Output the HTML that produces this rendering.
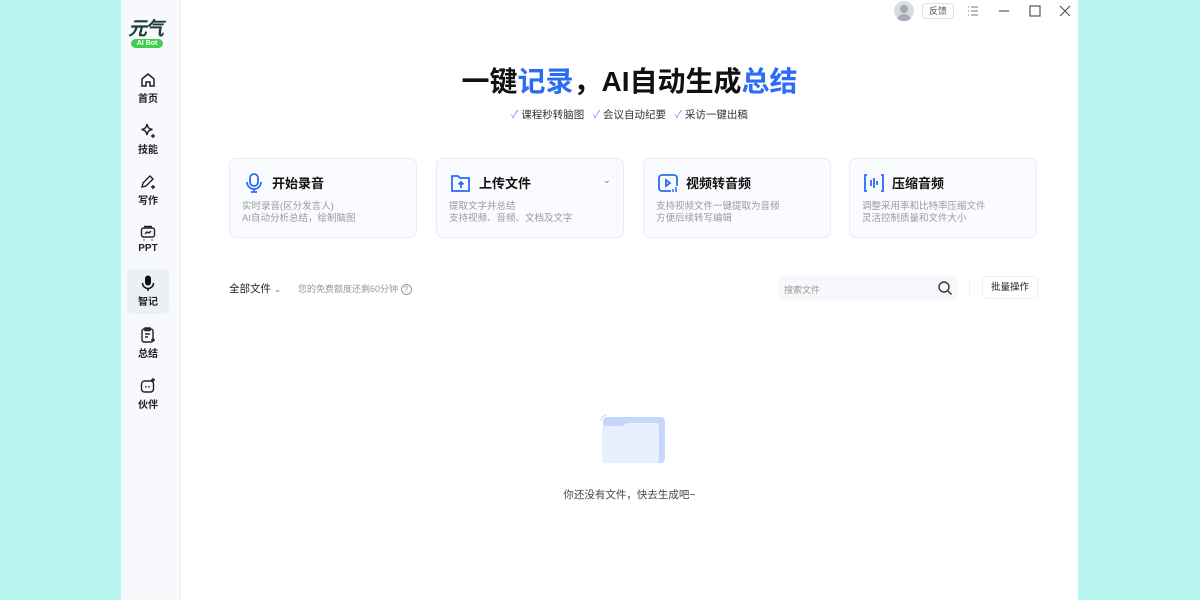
<!DOCTYPE html>
<html><head><meta charset="utf-8"><style>
*{margin:0;padding:0;box-sizing:border-box}
body{width:1200px;height:600px;background:#b9f5ef;font-family:"Liberation Sans","Noto Sans CJK SC",sans-serif;position:relative;overflow:hidden}
.side{position:absolute;left:121px;top:0;width:60px;height:600px;background:#f7f9fd;border-right:1px solid #eceef3}
.main{position:absolute;left:181px;top:0;width:897px;height:600px;background:#fff}
.nav{position:absolute;left:6px;width:42px;height:44px;text-align:center;font-size:10px;font-weight:bold;color:#222}
.nav svg{display:block;margin:1px auto 1px}
.abs{position:absolute}
.card{position:absolute;top:158px;width:188px;height:80px;border:1px solid #e6ecf8;border-radius:7px;background:#f9fbfe}
.card .t{position:absolute;left:42px;top:14px;font-size:13px;font-weight:bold;color:#111}
.card .d{position:absolute;left:12px;top:42px;font-size:9.5px;color:#9a9a9a;line-height:12px}
.card svg{position:absolute;left:13px;top:13px}
.blue{color:#2a6cf5}
</style></head><body>
<div class="side">
 <div class="abs" style="left:7px;top:14px;font-size:19px;font-weight:bold;font-style:italic;color:#1d3c3c;letter-spacing:-2px;font-family:'Noto Sans CJK SC',sans-serif">元气</div>
 <div class="abs" style="left:10px;top:39px;width:32px;height:9px;background:#3fcf4c;border-radius:5px;color:#fff;font-size:7px;font-weight:bold;text-align:center;line-height:9px">AI Bot</div>
 <div class="nav" style="top:70px"><svg width="18" height="18" viewBox="0 0 18 18" fill="none" stroke="#222" stroke-width="1.5"><path d="M3 8L9 3l6 5v7H11v-4H7v4H3z"/></svg>首页</div>
 <div class="nav" style="top:121px"><svg width="18" height="18" viewBox="0 0 18 18" fill="none" stroke="#222" stroke-width="1.4"><path d="M8 2c.6 3.5 2 5 5.5 5.5C10 8 8.6 9.5 8 13 7.4 9.5 6 8 2.5 7.5 6 7 7.4 5.5 8 2z"/><path d="M14 12v4M12 14h4"/></svg>技能</div>
 <div class="nav" style="top:172px"><svg width="18" height="18" viewBox="0 0 18 18" fill="none" stroke="#222" stroke-width="1.4"><path d="M3 14l1-4 7-7 3 3-7 7z"/><path d="M14 12v4M12 14h4"/></svg>写作</div>
 <div class="nav" style="top:223px"><svg width="18" height="18" viewBox="0 0 18 18" fill="none" stroke="#222" stroke-width="1.4"><rect x="2.5" y="4" width="13" height="9" rx="2"/><path d="M5 2.5h8M5 15.5v1M13 15.5v1M6 10l2-2 2 1 2-2"/></svg>PPT</div>
 <div class="nav" style="top:269px;height:45px;background:#ebeff6;border-radius:6px;padding-top:4px"><svg width="18" height="18" viewBox="0 0 18 18"><rect x="6" y="1.5" width="6" height="10" rx="3" fill="#111"/><path d="M3.5 9a5.5 5.5 0 0 0 11 0M9 14.5v2.5" stroke="#111" stroke-width="1.5" fill="none"/></svg>智记</div>
 <div class="nav" style="top:325px"><svg width="18" height="18" viewBox="0 0 18 18" fill="none" stroke="#222" stroke-width="1.4"><rect x="3" y="3" width="11" height="13" rx="2"/><path d="M6 2h5v2.5H6zM6 8h5M6 11h3M14 12v4M12 14h4"/></svg>总结</div>
 <div class="nav" style="top:376px"><svg width="18" height="18" viewBox="0 0 18 18" fill="none" stroke="#222" stroke-width="1.4"><rect x="2.5" y="4" width="12" height="11" rx="3"/><path d="M7 9v1.5M10 9v1.5M14 1v4M12 3h4"/></svg>伙伴</div>
</div>
<div class="main">
 <div class="abs" style="left:713px;top:1px;width:20px;height:20px;border-radius:50%;background:#d9dce2;overflow:hidden"><div class="abs" style="left:6px;top:4px;width:8px;height:8px;border-radius:50%;background:#a4a9b3"></div><div class="abs" style="left:3px;top:13px;width:14px;height:10px;border-radius:7px 7px 0 0;background:#a4a9b3"></div></div>
 <div class="abs" style="left:741px;top:3px;width:32px;height:16px;border:1px solid #dde0e6;border-radius:4px;font-size:9px;color:#555;text-align:center;line-height:14px">反馈</div>
 <svg class="abs" style="left:786px;top:5px" width="12" height="12" viewBox="0 0 12 12" stroke="#777" stroke-width="1"><path d="M1 2h1M4 2h7M1 6h1M4 6h7M1 10h1M4 10h7"/></svg>
 <svg class="abs" style="left:817px;top:5px" width="12" height="12" stroke="#555" stroke-width="1.2"><path d="M1 6h10"/></svg>
 <svg class="abs" style="left:848px;top:5px" width="12" height="12" fill="none" stroke="#555" stroke-width="1.2"><rect x="1" y="1" width="10" height="10"/></svg>
 <svg class="abs" style="left:878px;top:5px" width="12" height="12" stroke="#555" stroke-width="1.2"><path d="M1 1l10 10M11 1L1 11"/></svg>

 <div class="abs" style="left:0;width:897px;top:60px;text-align:center;font-size:28px;font-weight:bold;color:#111;letter-spacing:0">一键<span class="blue">记录</span>，AI自动生成<span class="blue">总结</span></div>
 <div class="abs" style="left:0;width:897px;top:107px;text-align:center;font-size:10.5px;color:#333"><span style="color:#7b8ef0">✓</span> 课程秒转脑图 &nbsp; <span style="color:#7b8ef0">✓</span> 会议自动纪要 &nbsp; <span style="color:#7b8ef0">✓</span> 采访一键出稿</div>

 <div class="card" style="left:48px"><svg width="22" height="22" viewBox="0 0 22 22" fill="none" stroke="#2a6cf5" stroke-width="1.8"><rect x="7" y="2" width="8" height="12" rx="4"/><path d="M4 10a7 7 0 0 0 14 0M11 17v3M8 20h6"/></svg><div class="t">开始录音</div><div class="d">实时录音(区分发言人)<br>AI自动分析总结，绘制脑图</div></div>
 <div class="card" style="left:255px"><svg width="22" height="22" viewBox="0 0 22 22" fill="none" stroke="#2a6cf5" stroke-width="1.8"><path d="M2 4h6l2 2h9v13H2z"/><path d="M11 16v-6M8.5 12.5L11 10l2.5 2.5"/></svg><div class="t">上传文件</div><div class="abs" style="right:12px;top:16px;font-size:10px;color:#888">⌄</div><div class="d">提取文字并总结<br>支持视频、音频、文档及文字</div></div>
 <div class="card" style="left:462px"><svg width="22" height="22" viewBox="0 0 22 22" fill="none" stroke="#2a6cf5" stroke-width="1.8"><path d="M14 19H5a3 3 0 0 1-3-3V6a3 3 0 0 1 3-3h12a3 3 0 0 1 3 3v8"/><path d="M9 8v6l4-3z"/><path d="M16 17v3M19 15v5" stroke-width="1.5"/></svg><div class="t">视频转音频</div><div class="d">支持视频文件一键提取为音频<br>方便后续转写编辑</div></div>
 <div class="card" style="left:668px"><svg width="22" height="22" viewBox="0 0 22 22" fill="none" stroke="#2a6cf5" stroke-width="1.8"><path d="M4 3H2v16h2M18 3h2v16h-2M8 8v6M11 6v10M14 9v4"/></svg><div class="t">压缩音频</div><div class="d">调整采用率和比特率压缩文件<br>灵活控制质量和文件大小</div></div>

 <div class="abs" style="left:48px;top:281px;font-size:10.5px;color:#222">全部文件 <span style="color:#777;font-size:9px">⌄</span></div>
 <div class="abs" style="left:117px;top:282px;font-size:9px;color:#999">您的免费额度还剩60分钟 <span style="display:inline-block;width:11px;height:11px;border:1px solid #999;border-radius:50%;text-align:center;line-height:9px;font-size:8px">?</span></div>
 <div class="abs" style="left:597px;top:276px;width:180px;height:24px;background:#f6f8fb;border-radius:6px;font-size:9px;color:#999;padding:7px 0 0 6px">搜索文件</div>
 <svg class="abs" style="left:756px;top:280px" width="16" height="16" fill="none" stroke="#333" stroke-width="1.4"><circle cx="7" cy="7" r="5"/><path d="M11 11l3.5 3.5"/></svg>
 <div class="abs" style="left:788px;top:280px;width:1px;height:16px;background:#eee"></div>
 <div class="abs" style="left:801px;top:276px;width:56px;height:23px;border:1px solid #eee;border-radius:5px;font-size:9.5px;color:#222;text-align:center;line-height:21px">批量操作</div>

 <svg class="abs" style="left:417px;top:410px" width="70" height="55"><path d="M3 11a6 6 0 0 1 6-6" stroke="#dde6f7" stroke-width="1.5" fill="none"/><rect x="5" y="7" width="62" height="46" rx="4" fill="#c7d7fb"/><path d="M4 19a3 3 0 0 1 3-3h18l4-3h29a3 3 0 0 1 3 3v34a3 3 0 0 1-3 3H7a3 3 0 0 1-3-3z" fill="#e8effd"/></svg>
 <div class="abs" style="left:0;width:897px;top:487px;text-align:center;font-size:10.5px;color:#444">你还没有文件，快去生成吧~</div>
</div>
</body></html>
